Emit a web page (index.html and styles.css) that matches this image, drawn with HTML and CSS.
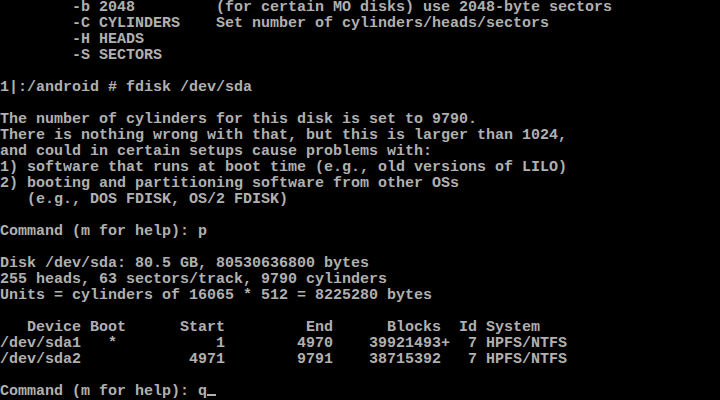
FILE: index.html
```html
<!DOCTYPE html>
<html lang="en">
<head>
    <meta charset="UTF-8">
    <meta name="viewport" content="width=device-width, initial-scale=1.0">
    <title>fdisk /dev/sda</title>
    <link rel="stylesheet" href="styles.css">
</head>
<body>
    <div class="screen">
<pre class="console">        -b 2048         (for certain MO disks) use 2048-byte sectors
        -C CYLINDERS    Set number of cylinders/heads/sectors
        -H HEADS
        -S SECTORS

1|:/android # fdisk /dev/sda

The number of cylinders for this disk is set to 9790.
There is nothing wrong with that, but this is larger than 1024,
and could in certain setups cause problems with:
1) software that runs at boot time (e.g., old versions of LILO)
2) booting and partitioning software from other OSs
   (e.g., DOS FDISK, OS/2 FDISK)

Command (m for help): p

Disk /dev/sda: 80.5 GB, 80530636800 bytes
255 heads, 63 sectors/track, 9790 cylinders
Units = cylinders of 16065 * 512 = 8225280 bytes

   Device Boot      Start         End      Blocks  Id System
/dev/sda1   *           1        4970    39921493+  7 HPFS/NTFS
/dev/sda2            4971        9791    38715392   7 HPFS/NTFS

Command (m for help): q<span class="cursor"></span></pre>
    </div>
</body>
</html>
```

FILE: styles.css
```css
html,
body {
    margin: 0;
    padding: 0;
    background-color: #000;
}
.screen {
    width: 720px;
    height: 400px;
    overflow: hidden;
    background-color: #000;
}
.console {
    margin: 0;
    font-family: 'Liberation Mono', 'DejaVu Sans Mono', monospace;
    font-size: 15px;
    font-weight: bold;
    line-height: 16px;
    color: #b0b0b0;
    white-space: pre;
}
.cursor {
    display: inline-block;
    width: 9px;
    height: 2px;
    background-color: #b0b0b0;
    vertical-align: -1px;
}
```
